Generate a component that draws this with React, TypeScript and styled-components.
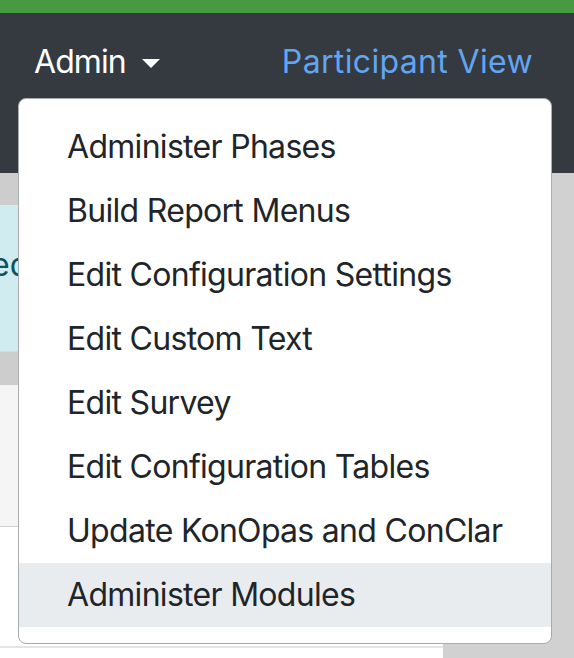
import React from "react";
import styled, { createGlobalStyle } from "styled-components";

const Global = createGlobalStyle`
  html, body { margin: 0; padding: 0; }
  body {
    font-family: Inter, "Noto Sans", "Liberation Sans", sans-serif;
    background: #ffffff;
    overflow: hidden;
  }
  * { box-sizing: border-box; }
`;

const Page = styled.div`
  position: relative;
  width: 574px;
  height: 658px;
  display: flex;
  flex-direction: column;
  overflow: hidden;
`;

const TopStripe = styled.div`
  height: 13px;
  background: #469a3f;
  flex: none;
`;

const NavBar = styled.nav`
  height: 160px;
  flex: none;
  background: #343a40;
  display: flex;
  align-items: flex-start;
  justify-content: space-between;
  padding: 25px 41px 0 34px;
`;

const NavToggle = styled.div`
  display: flex;
  align-items: center;
  gap: 16px;
  color: #ffffff;
  font-size: 32px;
  line-height: 48px;
  letter-spacing: -0.9px;
`;

const Caret = styled.span`
  width: 0;
  height: 0;
  border-left: 9px solid transparent;
  border-right: 9px solid transparent;
  border-top: 9px solid #ffffff;
  margin-top: 2px;
`;

const NavLink = styled.a`
  color: #62a5f3;
  font-size: 32px;
  line-height: 48px;
  letter-spacing: 0.35px;
  text-decoration: none;
`;

const Body = styled.div`
  flex: 1;
  display: flex;
  min-height: 0;
`;

const MainColumn = styled.div`
  width: 443px;
  display: flex;
  flex-direction: column;
  background: #ffffff;
`;

const SidePanel = styled.div`
  flex: 1;
  background: #d1d1d1;
`;

const Band = styled.div<{ $h: number }>`
  height: ${(p) => p.$h}px;
  background: #cdcdcd;
  flex: none;
`;

const Alert = styled.div`
  height: 147px;
  flex: none;
  background: #d1ecf1;
  border-bottom: 1px solid #bee5eb;
  color: #0c5460;
  font-size: 32px;
  line-height: 48px;
  padding-top: 36px;
  overflow: hidden;
  white-space: nowrap;
  text-indent: -9px;
`;

const Card = styled.div`
  height: 142px;
  flex: none;
  background: #f5f5f5;
  border-bottom: 1px solid #d3d3d3;
`;

const Blank = styled.div`
  height: 121px;
  flex: none;
  border-bottom: 2px solid #e2e4e6;
`;

const Menu = styled.div`
  position: absolute;
  left: 18px;
  top: 98px;
  width: 534px;
  padding: 16px 0;
  background: #ffffff;
  border: 1px solid #a9abad;
  border-radius: 8px;
  display: flex;
  flex-direction: column;
`;

const MenuItem = styled.div<{ $active?: boolean }>`
  padding: 8px 48px;
  font-size: 32px;
  line-height: 48px;
  letter-spacing: -0.7px;
  color: #212529;
  white-space: nowrap;
  background: ${(p) => (p.$active ? "#e9ecef" : "transparent")};
`;

const items = [
  "Administer Phases",
  "Build Report Menus",
  "Edit Configuration Settings",
  "Edit Custom Text",
  "Edit Survey",
  "Edit Configuration Tables",
  "Update KonOpas and ConClar",
  "Administer Modules",
];

export default function App() {
  return (
    <>
      <Global />
      <Page>
        <TopStripe />
        <NavBar>
          <NavToggle>
            Admin
            <Caret />
          </NavToggle>
          <NavLink href="#">Participant View</NavLink>
        </NavBar>
        <Body>
          <MainColumn>
            <Band $h={32} />
            <Alert>ed</Alert>
            <Band $h={33} />
            <Card />
            <Blank />
          </MainColumn>
          <SidePanel />
        </Body>
        <Menu>
          {items.map((t, i) => (
            <MenuItem key={t} $active={i === items.length - 1}>
              {t}
            </MenuItem>
          ))}
        </Menu>
      </Page>
    </>
  );
}
